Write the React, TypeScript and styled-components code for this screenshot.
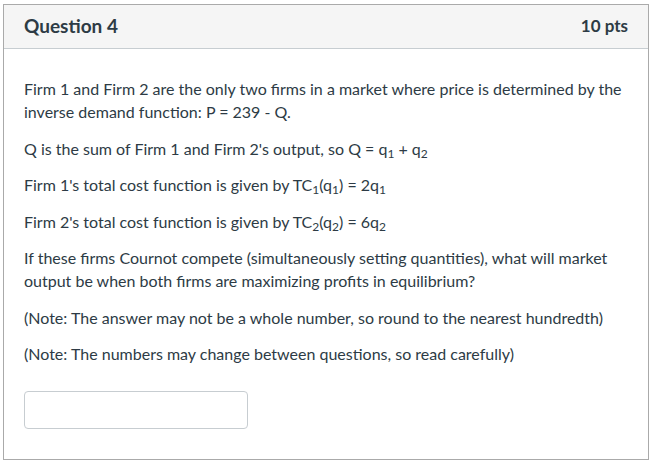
import styled, { createGlobalStyle } from "styled-components";

const GlobalStyle = createGlobalStyle`
  html, body {
    margin: 0;
    padding: 0;
    background: #ffffff;
  }
  body {
    font-family: Lato, "Liberation Sans", sans-serif;
    color: #2d3b45;
  }
`;

const Card = styled.section`
  margin: 4px 0 0 3px;
  width: 646px;
  height: 456px;
  box-sizing: border-box;
  border: 1px solid #aaaaaa;
  background: #ffffff;
  display: flex;
  flex-direction: column;
`;

const Header = styled.header`
  height: 44px;
  box-sizing: border-box;
  display: flex;
  align-items: center;
  justify-content: space-between;
  padding: 0 20px 3px;
  background: #f5f5f5;
  border-bottom: 1px solid #c7cdd1;
`;

const Title = styled.h2`
  margin: 0;
  font-size: 19px;
  font-weight: 700;
  color: #2d3b45;
`;

const Points = styled.div`
  font-size: 17px;
  font-weight: 700;
  color: #2d3b45;
`;

const Body = styled.div`
  padding: 28px 20px 0;
`;

const Para = styled.p`
  margin: 0 0 13.5px;
  font-size: 16px;
  line-height: 23px;
`;

// subscript digits (q₁, TC₂ ...)
const Sub = styled.sub`
  font-size: 12px;
  line-height: 0;
  vertical-align: -3px;
`;

const AnswerInput = styled.input`
  display: block;
  margin-top: 26px;
  width: 224px;
  height: 38px;
  box-sizing: border-box;
  border: 1px solid #c7cdd1;
  border-radius: 4px;
  padding: 0 8px;
  font-family: Lato, "Liberation Sans", sans-serif;
  font-size: 16px;
  color: #2d3b45;
  background: #ffffff;
  outline: none;
`;

export default function App() {
  return (
    <>
      <GlobalStyle />
      <Card>
        <Header>
          <Title>Question 4</Title>
          <Points>10 pts</Points>
        </Header>
        <Body>
          <Para>
            Firm 1 and Firm 2 are the only two firms in a market where price is determined by the
            inverse demand function: P = 239 - Q.
          </Para>
          <Para>
            Q is the sum of Firm 1 and Firm 2's output, so Q = q<Sub>1</Sub> + q<Sub>2</Sub>
          </Para>
          <Para>
            Firm 1's total cost function is given by TC<Sub>1</Sub>(q<Sub>1</Sub>) = 2q<Sub>1</Sub>
          </Para>
          <Para>
            Firm 2's total cost function is given by TC<Sub>2</Sub>(q<Sub>2</Sub>) = 6q<Sub>2</Sub>
          </Para>
          <Para>
            If these firms Cournot compete (simultaneously setting quantities), what will market
            output be when both firms are maximizing profits in equilibrium?
          </Para>
          <Para>(Note: The answer may not be a whole number, so round to the nearest hundredth)</Para>
          <Para>(Note: The numbers may change between questions, so read carefully)</Para>
          <AnswerInput type="text" />
        </Body>
      </Card>
    </>
  );
}
